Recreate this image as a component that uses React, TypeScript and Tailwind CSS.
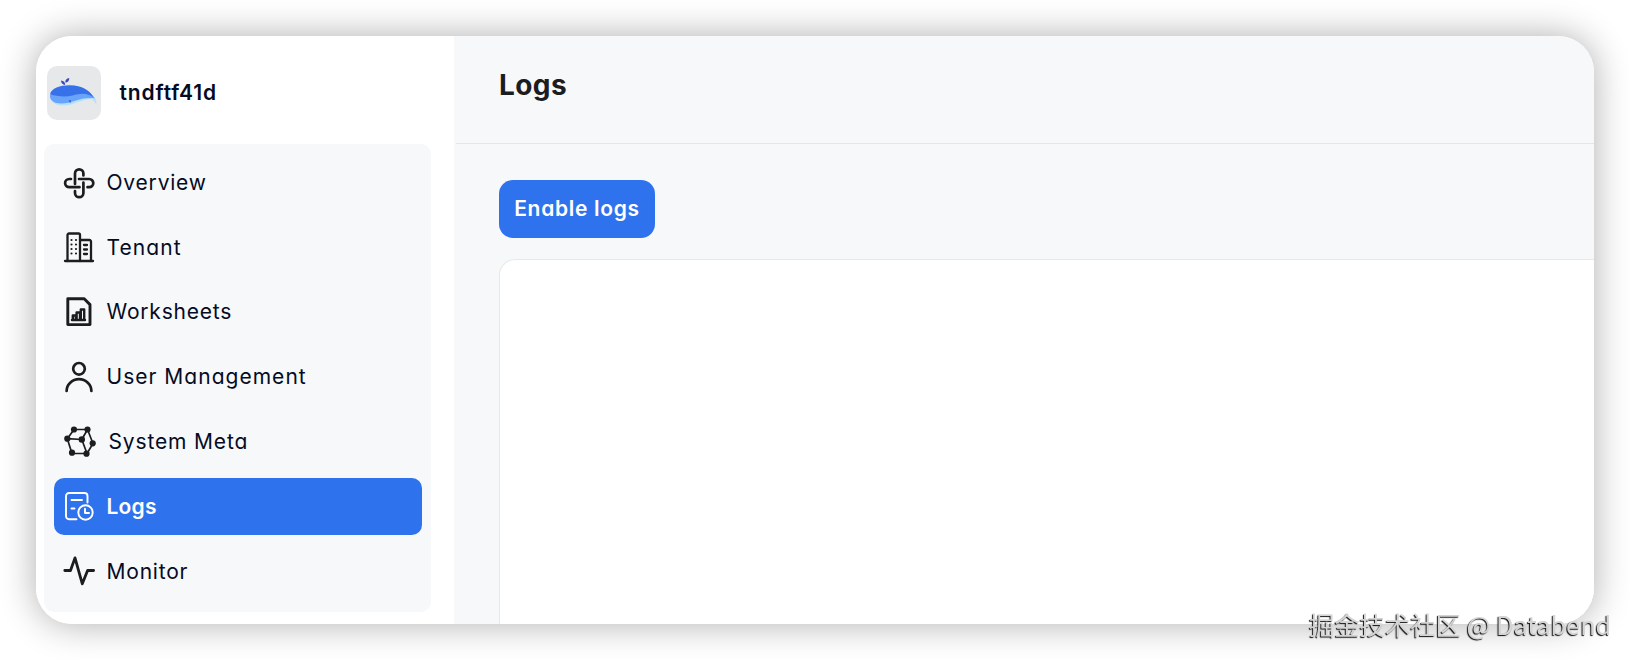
import type { ReactNode } from "react";

type NavItem = {
  label: string;
  icon: ReactNode;
  active?: boolean;
  className: string;
};

const STROKE = {
  width: 32,
  height: 32,
  viewBox: "0 0 32 32",
  fill: "none",
  stroke: "currentColor",
  strokeLinecap: "round",
  strokeLinejoin: "round",
} as const;

const NAV_ITEMS: NavItem[] = [
  {
    label: "Overview",
    className: "tracking-[0.8px]",
    icon: (
      <svg {...STROKE} strokeWidth={2.7}>
        <path d="M12 17V6.500a4.200 4.200 0 0 1 8.400 0V8.500" />
        <path d="M16 12h10.200a4.100 4.100 0 0 1 0 8.200H24.500" />
        <path d="M20.400 15.500v10.500a4.200 4.200 0 0 1-8.400 0V24" />
        <path d="M16.500 20.200H6.200a4.100 4.100 0 0 1 0-8.200H8" />
      </svg>
    ),
  },
  {
    label: "Tenant",
    className: "tracking-[1.1px]",
    icon: (
      <svg {...STROKE} strokeWidth={2.3}>
        <path d="M2 30h28" />
        <path d="M4.500 30V4a1.500 1.500 0 0 1 1.500-1.500h9.500A1.500 1.500 0 0 1 17 4v26" />
        <path d="M17 9h9.500a1.500 1.500 0 0 1 1.500 1.500V30" />
        <path d="M8.500 9v14M13 9v14" strokeWidth={2.200} strokeDasharray="0 4.500" />
        <path d="M21 14h3M21 18.500h3M21 23h3" />
      </svg>
    ),
  },
  {
    label: "Worksheets",
    className: "tracking-[0.8px]",
    icon: (
      <svg {...STROKE} strokeWidth={2.9}>
        <path d="M4.800 2.800h16.400l5.800 5.800v20H4.800z" />
        <path d="M9 24h13M9.800 23.500v-4h3v4M13.600 23.500v-7h3.400v7M17.800 23.500v-10h3.400v10" strokeWidth={2.400} />
      </svg>
    ),
  },
  {
    label: "User Management",
    className: "tracking-[1.02px]",
    icon: (
      <svg {...STROKE} strokeWidth={2.7}>
        <circle cx="16" cy="7.800" r="5.800" />
        <path d="M3.600 30c0-6.500 5.500-11.800 12.400-11.800S28.400 23.500 28.400 30" />
      </svg>
    ),
  },
  {
    label: "System Meta",
    className: "ml-0.5 tracking-[0.85px]",
    icon: (
      <svg {...STROKE} className="overflow-visible" strokeWidth={1.700}>
        <path d="M11 3.500h13.500l5.500 14-6 10H9L4.300 12.700zM4.300 12.700l14.500.800 5.700-10M18.800 13.500 24 27.500" />
        <g fill="currentColor" stroke="none">
          <circle cx="11" cy="3.500" r="3.100" />
          <circle cx="24.500" cy="3.500" r="3.100" />
          <circle cx="4.300" cy="12.700" r="3.100" />
          <circle cx="18.800" cy="13.500" r="3.200" />
          <circle cx="29.700" cy="17.300" r="3.100" />
          <circle cx="9" cy="26.700" r="3.100" />
          <circle cx="23.500" cy="27.700" r="3.100" />
        </g>
      </svg>
    ),
  },
  {
    label: "Logs",
    active: true,
    className: "font-semibold tracking-[0.2px]",
    icon: (
      <svg {...STROKE} strokeWidth={1.900}>
        <path d="M13.500 29.300H6a3 3 0 0 1-3-3V6a3 3 0 0 1 3-3h15.500a3 3 0 0 1 3 3V12.500" />
        <path d="M8.500 10h10.500M8.500 18.500h3" />
        <circle cx="22.500" cy="22.500" r="7.200" />
        <path d="M22 18.700v4.300h4" />
      </svg>
    ),
  },
  {
    label: "Monitor",
    className: "tracking-[0.8px]",
    icon: (
      <svg {...STROKE} strokeWidth={2.8}>
        <path d="M1.800 15.500h5.700l4.500-12.600L19.300 28.800l5.300-13.300h6" />
      </svg>
    ),
  },
];

function WhaleLogo() {
  return (
    <div className="h-[54px] w-[54px] shrink-0 overflow-hidden rounded-[10px] bg-[#e7e8ea]">
      <svg width="54" height="54" viewBox="0 0 54 54">
        <path d="M14 14.500c2.600.3 4.200 1.800 4.200 4.500-2.600-.5-4.200-2-4.200-4.500z" fill="#3549c4" />
        <path d="M18.300 16.500c-.2-2.500 1.200-4.200 4-4.500 0 2.800-1.300 4.400-4 4.500z" fill="#3549c4" />
        <path d="M3 31c2 7 8 9 15 8.500 10-.5 15-6 27-6.500l4.500 5.500c.3-4-1-7-4-9z" fill="#b4e1fe" />
        <path d="M3 29c-.5 5.500 4 8.500 11 8.500 12 0 17-6 32-5.500l2 .5C45 28 42 25 37 24z" fill="#69a4fa" />
        <path d="M3 28.500c1-6.500 11-9.500 20-9.300 12 .3 20 5 23.500 12.300-6-5-13-4.500-21-2-8 2-16 .5-22.500-1z" fill="#3671e9" />
        <path d="M21.500 34.500l2.500-.5-.5 3.300z" fill="#3366cc" />
      </svg>
    </div>
  );
}

function Sidebar() {
  return (
    <aside className="w-[418px] shrink-0 bg-white pl-2 pt-[30px]">
      <div className="flex h-[54px] items-center gap-[18.5px] pl-[3px]">
        <WhaleLogo />
        <span className="text-[21px] font-semibold leading-8 tracking-[0.85px] text-[#050b24]">tndftf41d</span>
      </div>
      <nav className="mt-6 flex w-[387px] flex-col gap-[7.8px] rounded-[10px] bg-[#f6f8fa] p-2.5 pb-3 pr-[9px]">
        {NAV_ITEMS.map((item) => (
          <a
            key={item.label}
            className={`flex h-[57px] items-center gap-[11.5px] rounded-[10px] pl-[9px] ${
              item.active ? "bg-[#2f72ed] text-white" : "text-[#1b1d1f]"
            }`}
          >
            <span className="w-8 shrink-0">{item.icon}</span>
            <span className={`whitespace-nowrap text-[21px] ${item.active ? "" : "text-[#050b24]"} ${item.className}`}>
              {item.label}
            </span>
          </a>
        ))}
      </nav>
    </aside>
  );
}

export default function App() {
  return (
    <div className="relative h-[660px] w-[1630px] overflow-hidden bg-white p-9 font-['Inter',sans-serif] [font-feature-settings:'cv11']">
      <div className="h-[588px] rounded-[36px] shadow-[0_0_36px_rgba(0,0,0,0.32)]">
        <div className="flex h-full overflow-hidden rounded-[36px]">
          <Sidebar />
          <main className="flex flex-1 flex-col bg-[#f6f8fa]">
            <header className="ml-0.5 flex h-[108px] items-center border-b border-[#e4e6e8] pb-2.5 pl-[43px]">
              <h1 className="text-[28px] font-bold tracking-[0.4px] text-[#1b1d1f]">Logs</h1>
            </header>
            <div className="flex flex-1 flex-col items-start pl-[45px] pt-9">
              <button className="h-[58px] w-[156px] whitespace-nowrap rounded-[14px] bg-[#2f72ed] text-[21px] font-semibold tracking-[0.7px] text-white">
                Enable logs
              </button>
              <div className="mt-[21px] w-full flex-1 rounded-tl-[16px] border-l border-t border-[#e6e8ea] bg-white" />
            </div>
          </main>
        </div>
      </div>
      {/* Watermark */}
      <div className="absolute right-[19px] top-[606px] whitespace-nowrap font-['Noto_Sans_CJK_SC',sans-serif] text-[25.3px] leading-[36px] text-[#d4d4d4] will-change-transform [text-shadow:-1px_1px_1px_rgba(0,0,0,0.95)]">
        掘金技术社区 @ Databend
      </div>
    </div>
  );
}
